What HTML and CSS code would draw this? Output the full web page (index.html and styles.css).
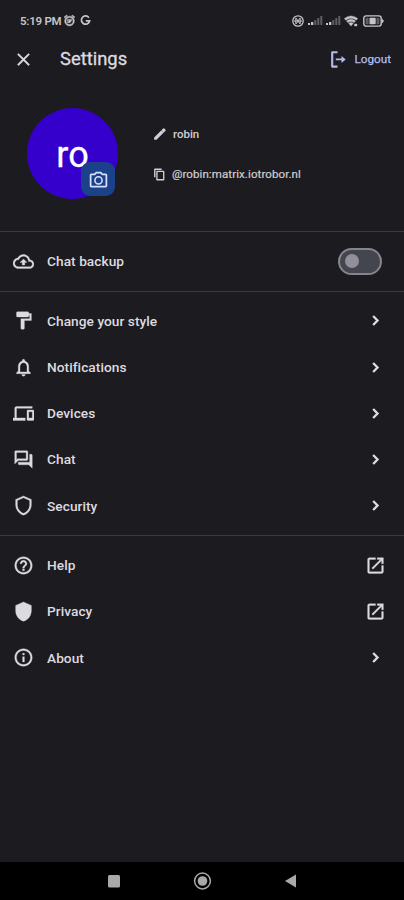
FILE: index.html
```html
<!DOCTYPE html>
<html lang="en">
<head>
<meta charset="utf-8">
<title>Settings</title>
<link rel="stylesheet" href="styles.css">
</head>
<body>
<div class="screen">
  <header class="status">
    <span class="time">5:19 PM</span>
    <svg class="alarm" viewBox="0 0 24 24"><path d="M22 5.700l-4.600-3.860-1.290 1.530 4.600 3.860L22 5.700zM7.880 3.390L6.600 1.860 2 5.710l1.290 1.530 4.590-3.850zM12 4a9 9 0 1 0 0 18 9 9 0 0 0 0-18zm0 15.500a6.500 6.500 0 1 1 0-13 6.500 6.500 0 0 1 0 13zM8 10h8v2l-3 4H8v-2h2l2-2H8z" stroke="currentColor" stroke-width=".8"/></svg>
    <svg class="google" viewBox="0 0 12 12"><path d="M9.700 2.900A4.500 4.500 0 1 0 10.500 6.300H6.300" fill="none" stroke="currentColor" stroke-width="1.900"/></svg>
    <span class="spacer"></span>
    <svg class="dnd" viewBox="0 0 12 12"><circle cx="6" cy="6" r="5.200" fill="none" stroke="currentColor" stroke-width="1.300"/><path d="M4 3l4 6M8 3L4 9M3.800 3.200v5.600M8.200 3.200v5.600M2 6h8" fill="none" stroke="currentColor" stroke-width="1"/></svg>
    <svg class="signal" viewBox="0 0 15 11"><path d="M0 8h2v2H0zM3 7h2.300v3H3z"/><path class="dim" d="M6.300 5h2v5h-2zM9.300 3h2v7h-2zM12.300 1h2v9h-2z"/></svg>
    <svg class="signal second" viewBox="0 0 15 11"><path d="M0 8h2v2H0zM3 7h2.300v3H3z"/><path class="dim" d="M6.300 5h2v5h-2zM9.300 3h2v7h-2zM12.300 1h2v9h-2z"/></svg>
    <svg class="wifi" viewBox="0 0 14 12"><path d="M7 11L4.700 8.400Q7 6.700 9.300 8.400zM3.900 7.600L2.500 6q4.500-3.400 9 0l-1.400 1.600Q7 5.300 3.900 7.600zM1.800 5.200L.3 3.500Q7-1.700 13.700 3.500l-1.500 1.700Q7 1.400 1.800 5.200zM10.500 9h2.500v2h-2.500z" stroke="currentColor" stroke-width=".4"/></svg>
    <svg class="battery" viewBox="0 0 21 12"><rect x=".8" y=".9" width="17.400" height="10.200" rx="2.300" fill="none" stroke="currentColor" stroke-width="1.400"/><rect x="2.600" y="2.800" width="3" height="6.400" class="dim"/><rect x="6.500" y="2.800" width="6.200" height="6.400" rx=".8"/><rect x="13.500" y="2.800" width="2.900" height="6.400" class="dim"/><path d="M19 3.500l2 2.500-2 2.500z"/></svg>
  </header>

  <nav class="appbar">
    <svg class="icon" viewBox="0 0 24 24"><path d="M19 6.410L17.590 5 12 10.590 6.410 5 5 6.410 10.590 12 5 17.590 6.410 19 12 13.410 17.590 19 19 17.590 13.410 12z"/></svg>
    <h1>Settings</h1>
    <a class="logout">
      <svg viewBox="0 0 17 17"><path d="M7.500 1.300H2.200v14.300h5.300" fill="none" stroke="currentColor" stroke-width="2.100" stroke-linejoin="round"/><path d="M5.800 7.500h5.700V4.900l4.200 3.500-4.200 3.500V9.300H5.800z"/></svg>
      <span>Logout</span>
    </a>
  </nav>

  <section class="profile">
    <div class="avatar">
      <span>ro</span>
      <button class="camera" aria-label="Change avatar"><svg viewBox="0 0 24 24"><path d="M20 5h-3.170L15 3H9L7.170 5H4c-1.100 0-2 .9-2 2v12c0 1.100.9 2 2 2h16c1.100 0 2-.9 2-2V7c0-1.100-.9-2-2-2zm0 14H4V7h4.050l1.830-2h4.240l1.830 2H20v12zM12 8a5 5 0 1 0 0 10 5 5 0 0 0 0-10zm0 8.200a3.200 3.200 0 1 1 0-6.400 3.200 3.200 0 0 1 0 6.400z"/></svg></button>
    </div>
    <div class="identity">
      <div class="line name"><svg viewBox="0 0 24 24"><path d="M2 18v4h4L18 10l-4-4zM21.400 6.600a1.500 1.500 0 0 0 0-2.100l-1.900-1.900a1.500 1.500 0 0 0-2.100 0L14.300 5.700l4 4z"/></svg><span>robin</span></div>
      <div class="line handle"><svg viewBox="0 0 24 24"><path d="M16 1H4c-1.100 0-2 .9-2 2v14h2.600V3.500H16V1zm3 4H8c-1.100 0-2 .9-2 2v14c0 1.100.9 2 2 2h11c1.100 0 2-.9 2-2V7c0-1.100-.9-2-2-2zm-.5 15.500h-10v-13h10z"/></svg><span>@robin:matrix.iotrobor.nl</span></div>
    </div>
  </section>

  <section class="group">
    <div class="row"><svg class="icon" viewBox="0 0 24 24"><path d="M19.350 10.040C18.670 6.590 15.640 4 12 4 9.110 4 6.600 5.640 5.350 8.040 2.340 8.360 0 10.910 0 14c0 3.310 2.690 6 6 6h13c2.760 0 5-2.240 5-5 0-2.640-2.050-4.780-4.650-4.960zM19 18H6c-2.210 0-4-1.790-4-4 0-2.050 1.530-3.760 3.560-3.970l1.070-.11.5-.95C8.080 7.140 9.940 6 12 6c2.620 0 4.880 1.860 5.390 4.430l.3 1.500 1.530.11c1.560.1 2.780 1.410 2.780 2.960 0 1.650-1.350 3-3 3zM8 13h2.550v3h2.900v-3H16l-4-4z"/></svg><span class="label">Chat backup</span><span class="switch"></span></div>
  </section>

  <section class="group">
    <div class="row"><svg class="icon" viewBox="0 0 24 24"><path d="M18 4V3c0-.55-.45-1-1-1H5c-.55 0-1 .45-1 1v4c0 .55.45 1 1 1h12c.55 0 1-.45 1-1V6h1v4H9v11c0 .55.45 1 1 1h2c.55 0 1-.45 1-1v-9h8V4h-3z"/></svg><span class="label">Change your style</span><svg class="icon" viewBox="0 0 24 24"><path class="chevron" d="M9.300 6.900l5 5.100-5 5.100"/></svg></div>
    <div class="row"><svg class="icon" viewBox="0 0 24 24"><path d="M12 22c1.100 0 2-.9 2-2h-4c0 1.100.9 2 2 2zm6-6v-5c0-3.070-1.630-5.640-4.500-6.320V4c0-.83-.67-1.500-1.500-1.500s-1.500.67-1.500 1.500v.68C7.640 5.360 6 7.920 6 11v5l-2 2v1h16v-1l-2-2zm-2 1H8v-6c0-2.480 1.510-4.500 4-4.500s4 2.020 4 4.500v6z"/></svg><span class="label">Notifications</span><svg class="icon" viewBox="0 0 24 24"><path class="chevron" d="M9.300 6.900l5 5.100-5 5.100"/></svg></div>
    <div class="row"><svg class="icon" viewBox="0 0 24 24"><path d="M4 6h18V4H4c-1.100 0-2 .9-2 2v11H0v3h14v-3H4V6zm19 2h-6c-.55 0-1 .45-1 1v10c0 .55.45 1 1 1h6c.55 0 1-.45 1-1V9c0-.55-.45-1-1-1zm-1 9h-4v-7h4v7z"/></svg><span class="label">Devices</span><svg class="icon" viewBox="0 0 24 24"><path class="chevron" d="M9.300 6.900l5 5.100-5 5.100"/></svg></div>
    <div class="row"><svg class="icon" viewBox="0 0 24 24"><path d="M15 4v7H5.170L4 12.170V4h11m1-2H3c-.55 0-1 .45-1 1v14l4-4h10c.55 0 1-.45 1-1V3c0-.55-.45-1-1-1zm5 4h-2v9H6v2c0 .55.45 1 1 1h11l4 4V7c0-.55-.45-1-1-1z"/></svg><span class="label">Chat</span><svg class="icon" viewBox="0 0 24 24"><path class="chevron" d="M9.300 6.900l5 5.100-5 5.100"/></svg></div>
    <div class="row"><svg class="icon" viewBox="0 0 24 24"><path d="M12 1L3 5v6c0 5.550 3.840 10.740 9 12 5.160-1.260 9-6.450 9-12V5l-9-4zm7 10c0 4.520-2.980 8.690-7 9.930-4.020-1.240-7-5.410-7-9.930V6.300l7-3.110 7 3.110V11z"/></svg><span class="label">Security</span><svg class="icon" viewBox="0 0 24 24"><path class="chevron" d="M9.300 6.900l5 5.100-5 5.100"/></svg></div>
  </section>

  <section class="group">
    <div class="row"><svg class="icon" viewBox="0 0 24 24"><path d="M11 18h2v-2h-2v2zm1-16C6.480 2 2 6.480 2 12s4.480 10 10 10 10-4.480 10-10S17.520 2 12 2zm0 18c-4.410 0-8-3.590-8-8s3.590-8 8-8 8 3.590 8 8-3.590 8-8 8zm0-14c-2.210 0-4 1.790-4 4h2c0-1.100.9-2 2-2s2 .9 2 2c0 2-3 1.750-3 5h2c0-2.250 3-2.500 3-5 0-2.210-1.790-4-4-4z"/></svg><span class="label">Help</span><svg class="icon" viewBox="0 0 24 24"><path d="M19 19H5V5h7V3H5c-1.110 0-2 .9-2 2v14c0 1.100.89 2 2 2h14c1.100 0 2-.9 2-2v-7h-2v7zM14 3v2h3.590l-9.830 9.830 1.410 1.410L19 6.410V10h2V3h-7z"/></svg></div>
    <div class="row"><svg class="icon" viewBox="0 0 24 24"><path d="M12 1L3 5v6c0 5.550 3.840 10.740 9 12 5.160-1.260 9-6.450 9-12V5l-9-4z"/></svg><span class="label">Privacy</span><svg class="icon" viewBox="0 0 24 24"><path d="M19 19H5V5h7V3H5c-1.110 0-2 .9-2 2v14c0 1.100.89 2 2 2h14c1.100 0 2-.9 2-2v-7h-2v7zM14 3v2h3.590l-9.830 9.830 1.410 1.410L19 6.410V10h2V3h-7z"/></svg></div>
    <div class="row"><svg class="icon" viewBox="0 0 24 24"><path d="M11 7h2v2h-2V7zm0 4h2v6h-2v-6zm1-9C6.480 2 2 6.480 2 12s4.480 10 10 10 10-4.480 10-10S17.520 2 12 2zm0 18c-4.410 0-8-3.590-8-8s3.590-8 8-8 8 3.590 8 8-3.590 8-8 8z"/></svg><span class="label">About</span><svg class="icon" viewBox="0 0 24 24"><path class="chevron" d="M9.300 6.900l5 5.100-5 5.100"/></svg></div>
  </section>

  <footer class="sysnav">
    <svg viewBox="0 0 20 20"><rect x="4" y="4" width="12" height="12.500" rx="1.500"/></svg>
    <svg viewBox="0 0 20 20"><circle cx="10.500" cy="10" r="7.900" fill="none" stroke="currentColor" stroke-width="1.500"/><circle cx="10.500" cy="10" r="4.800"/></svg>
    <svg viewBox="0 0 20 20"><path d="M16 3.500v13L5 10z"/></svg>
  </footer>
</div>
</body>
</html>
```
FILE: styles.css
```css
* { box-sizing: border-box; }
body { margin: 0; background: #1c1b1f; color: #dcdbe0; font-family: Roboto, sans-serif; }
svg { display: block; flex: none; fill: currentColor; }
.screen { width: 404px; height: 900px; display: flex; flex-direction: column; overflow: hidden; }

.status { height: 40px; padding: 1px 20px 0; display: flex; align-items: center; color: #c6c6c9; }
.time { font-size: 11.5px; font-weight: 600; letter-spacing: -.25px; width: 42px; white-space: nowrap; }
.alarm { width: 13px; height: 13px; margin-left: 1px; }
.google { width: 11px; height: 11px; margin-left: 4px; }
.spacer { flex: 1; }
.dnd { width: 12px; height: 12px; }
.signal { width: 15px; height: 11px; margin-left: 4px; }
.signal.second { margin-left: 3px; }
.wifi { width: 14px; height: 12px; margin-left: 3px; }
.battery { width: 21px; height: 12px; margin-left: 5px; }
.dim { opacity: .4; }

.appbar { height: 38px; padding: 0 13px; display: flex; align-items: center; }
.icon { width: 21px; height: 21px; stroke: currentColor; stroke-width: .35; }
h1 { margin: 0 0 0 26px; font-size: 18.400px; font-weight: 400; line-height: 24px; -webkit-text-stroke: .3px; }
.logout { margin-left: auto; display: flex; align-items: center; gap: 8px; color: #b3bcec; font-size: 11.700px; font-weight: 400; -webkit-text-stroke: .25px; }
.logout svg { width: 17px; height: 17px; }

.profile { height: 153px; padding: 30px 27px 0; display: flex; }
.avatar { position: relative; width: 91px; height: 91px; border-radius: 50%; background: #3500cb; color: #fff; display: flex; align-items: center; justify-content: center; font-size: 36px; line-height: 40px; padding-top: 3px; -webkit-text-stroke: .3px; }
.camera { position: absolute; right: 3px; bottom: 3px; width: 34px; height: 34px; padding: 0; border: 0; border-radius: 9px; background: #1a418a; color: #d5e0ff; display: grid; place-items: center; }
.camera svg { width: 21px; height: 21px; }
.identity { margin-left: 35px; padding-top: 16px; display: flex; flex-direction: column; gap: 20px; }
.line { height: 20px; display: flex; align-items: center; gap: 6px; font-size: 11.5px; color: #d0cfd5; white-space: nowrap; }
.line svg { width: 14px; height: 14px; }
.line.handle svg { width: 13px; height: 13px; }
.name { font-weight: 500; }
.handle { letter-spacing: .1px; -webkit-text-stroke: .2px; }

.group { border-top: 1px solid #3b3a3f; padding: 6.200px 18px 6.200px 13px; }
.row { height: 46.200px; display: flex; align-items: center; }
.label { flex: 1; margin-left: 13px; font-size: 13.700px; font-weight: 500; line-height: 18px; letter-spacing: .05px; }
.chevron { fill: none; stroke: currentColor; stroke-width: 2.700; }
.switch { width: 44px; height: 27px; margin-right: 4px; border: 2px solid #85858b; border-radius: 14px; background: #43464f; display: flex; align-items: center; padding-left: 5px; }
.switch::before { content: ""; width: 14px; height: 14px; border-radius: 50%; background: #918f9a; }

.sysnav { margin-top: auto; height: 38px; background: #000; color: #a9a9a9; display: flex; justify-content: space-between; padding: 9px 104px; }
.sysnav svg { width: 20px; height: 20px; }
```
